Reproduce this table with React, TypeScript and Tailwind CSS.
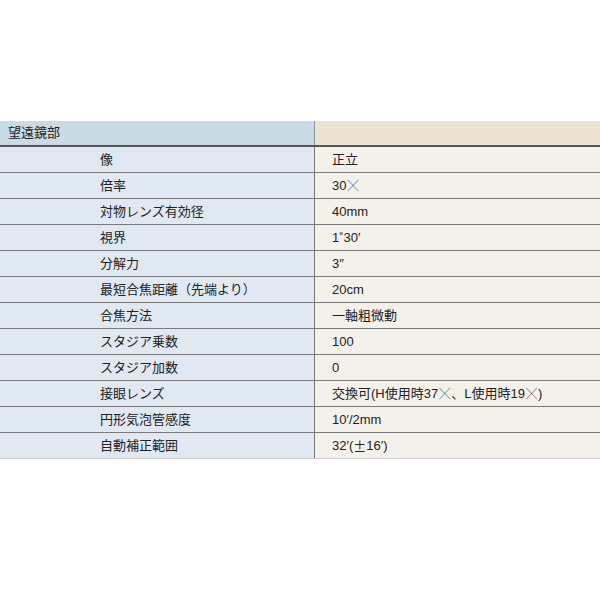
import React from "react";

const X = () => (
  <span
    style={{ fontFamily: '"Noto Sans CJK JP", sans-serif' }}
    className="text-[11px] leading-none mx-[1px]"
  >
    ╳
  </span>
);

const Cjk = ({ children }: { children: React.ReactNode }) => (
  <span style={{ fontFamily: '"Noto Sans CJK JP", sans-serif' }}>{children}</span>
);

const rows: [string, React.ReactNode][] = [
  ["像", "正立"],
  ["倍率", <>30<X /></>],
  ["対物レンズ有効径", "40mm"],
  ["視界", "1˚30′"],
  ["分解力", "3″"],
  ["最短合焦距離（先端より）", "20cm"],
  ["合焦方法", "一軸粗微動"],
  ["スタジア乗数", "100"],
  ["スタジア加数", "0"],
  ["接眼レンズ", <>交換可(H使用時37<X />、L使用時19<X />)</>],
  ["円形気泡管感度", "10′/2mm"],
  ["自動補正範囲", <>32′(<Cjk>±</Cjk>16′)</>],
];

export default function App() {
  return (
    <div
      className="w-[600px] h-[600px] bg-white pt-[121px] text-[13px] text-[#222]"
      style={{ fontFamily: '"Liberation Sans", "Noto Sans CJK JP", sans-serif' }}
    >
      {/* Header */}
      <div className="flex h-[26px] border-b-2 border-[#555]">
        <div className="w-[315px] shrink-0 bg-[#cadbe6] border-r border-[#8a98a2] pl-[8px] flex items-center">
          望遠鏡部
        </div>
        <div className="flex-1 bg-[#ebe4d5]" />
      </div>

      {/* Rows */}
      {rows.map(([label, value], i) => (
        <div
          key={i}
          className={`flex h-[26px] border-b ${
            i === rows.length - 1 ? "border-[#cfcfcf]" : "border-[#7a7a7a]"
          }`}
        >
          <div className="w-[315px] shrink-0 bg-[#e0e9f1] border-r border-[#777] pl-[100px] flex items-center">
            {label}
          </div>
          <div className="flex-1 bg-[#f4f1ea] pl-[17px] flex items-center">
            {value}
          </div>
        </div>
      ))}
    </div>
  );
}
